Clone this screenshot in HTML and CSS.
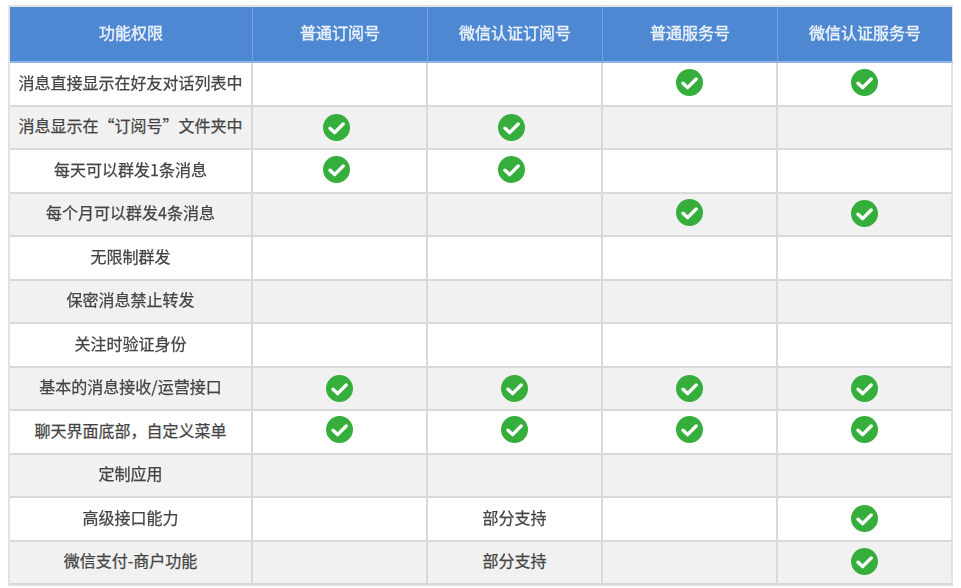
FILE: index.html
```html
<!DOCTYPE html>
<html lang="zh-CN">
<head>
<meta charset="utf-8">
<title>功能权限</title>
<link rel="stylesheet" href="styles.css">
</head>
<body>
<svg class="defs" width="0" height="0" aria-hidden="true">
  <symbol id="ok" viewBox="0 0 27 27">
    <circle cx="13.5" cy="13.5" r="13.5" fill="#36ae3c"/>
    <path d="M7 14.2l4.6 4.4 8.6-8.6" fill="none" stroke="#fff" stroke-width="3.4" stroke-linecap="round" stroke-linejoin="round"/>
  </symbol>
</svg>
<main class="frame">
  <div class="grid" role="table">
    <div class="head" role="row">
      <div class="cell">功能权限</div><div class="cell">普通订阅号</div><div class="cell">微信认证订阅号</div><div class="cell">普通服务号</div><div class="cell">微信认证服务号</div>
    </div>
    <div class="row" role="row">
      <div class="cell">消息直接显示在好友对话列表中</div><div class="cell"></div><div class="cell"></div>
      <div class="cell"><svg class="ok up"><use href="#ok"/></svg></div><div class="cell"><svg class="ok up"><use href="#ok"/></svg></div>
    </div>
    <div class="row" role="row">
      <div class="cell">消息显示在“订阅号”文件夹中</div>
      <div class="cell"><svg class="ok left"><use href="#ok"/></svg></div><div class="cell"><svg class="ok left"><use href="#ok"/></svg></div>
      <div class="cell"></div><div class="cell"></div>
    </div>
    <div class="row" role="row">
      <div class="cell">每天可以群发1条消息</div>
      <div class="cell"><svg class="ok left up"><use href="#ok"/></svg></div><div class="cell"><svg class="ok left up"><use href="#ok"/></svg></div>
      <div class="cell"></div><div class="cell"></div>
    </div>
    <div class="row" role="row">
      <div class="cell">每个月可以群发4条消息</div><div class="cell"></div><div class="cell"></div>
      <div class="cell"><svg class="ok up2"><use href="#ok"/></svg></div><div class="cell"><svg class="ok up"><use href="#ok"/></svg></div>
    </div>
    <div class="row" role="row"><div class="cell">无限制群发</div><div class="cell"></div><div class="cell"></div><div class="cell"></div><div class="cell"></div></div>
    <div class="row" role="row"><div class="cell">保密消息禁止转发</div><div class="cell"></div><div class="cell"></div><div class="cell"></div><div class="cell"></div></div>
    <div class="row" role="row"><div class="cell">关注时验证身份</div><div class="cell"></div><div class="cell"></div><div class="cell"></div><div class="cell"></div></div>
    <div class="row" role="row">
      <div class="cell">基本的消息接收/运营接口</div>
      <div class="cell"><svg class="ok"><use href="#ok"/></svg></div><div class="cell"><svg class="ok"><use href="#ok"/></svg></div>
      <div class="cell"><svg class="ok"><use href="#ok"/></svg></div><div class="cell"><svg class="ok"><use href="#ok"/></svg></div>
    </div>
    <div class="row" role="row">
      <div class="cell">聊天界面底部，自定义菜单</div>
      <div class="cell"><svg class="ok up2"><use href="#ok"/></svg></div><div class="cell"><svg class="ok up2"><use href="#ok"/></svg></div>
      <div class="cell"><svg class="ok up2"><use href="#ok"/></svg></div><div class="cell"><svg class="ok up2"><use href="#ok"/></svg></div>
    </div>
    <div class="row" role="row"><div class="cell">定制应用</div><div class="cell"></div><div class="cell"></div><div class="cell"></div><div class="cell"></div></div>
    <div class="row" role="row">
      <div class="cell">高级接口能力</div><div class="cell"></div><div class="cell">部分支持</div><div class="cell"></div>
      <div class="cell"><svg class="ok"><use href="#ok"/></svg></div>
    </div>
    <div class="row" role="row">
      <div class="cell">微信支付-商户功能</div><div class="cell"></div><div class="cell">部分支持</div><div class="cell"></div>
      <div class="cell"><svg class="ok up"><use href="#ok"/></svg></div>
    </div>
  </div>
</main>
</body>
</html>
```
FILE: styles.css
```css
html, body {
  margin: 0;
  background: #fff;
}
.defs {
  display: block;
  height: 0;
}
.frame {
  padding: 5px 0 0 8px;
  width: 945px;
}
.grid {
  display: grid;
  grid-template-columns: 243px repeat(4, 175px);
  grid-template-rows: 56px repeat(12, 43.5px);
  border: solid #e2e2e2;
  border-width: 2px 0 1px 2px;
  font-family: "Noto Sans CJK SC", "Noto Sans", sans-serif;
  font-size: 16px;
  color: #444;
  -webkit-text-stroke: 0.25px #444;
  filter: blur(0.5px);
}
.head, .row {
  display: contents;
}
.cell {
  display: flex;
  align-items: center;
  justify-content: center;
  box-sizing: border-box;
  border-right: 2px solid #d9d9d9;
  border-bottom: 2px solid #d9d9d9;
  background: #fff;
  white-space: nowrap;
  padding-bottom: 4px;
}
.cell:nth-child(5) {
  border-right-color: #e2e2e2;
}
.row:nth-child(odd) .cell {
  background: #f1f1f1;
}
.head .cell {
  background: #4e88d2;
  color: #eaf1fa;
  -webkit-text-stroke: 0.4px #eaf1fa;
  border-right: 1px solid #7aa6de;
  border-bottom: 2px solid #8fb5e4;
  padding-bottom: 4px;
}
.head .cell:nth-child(5) {
  border-right: 1px solid #e2e2e2;
}
.ok {
  width: 27px;
  height: 27px;
  flex: none;
  margin-top: 4px;
}
.ok.left {
  margin-right: 6px;
}
.ok.up {
  margin-top: 2px;
}
.ok.up2 {
  margin-top: 0;
}
```
